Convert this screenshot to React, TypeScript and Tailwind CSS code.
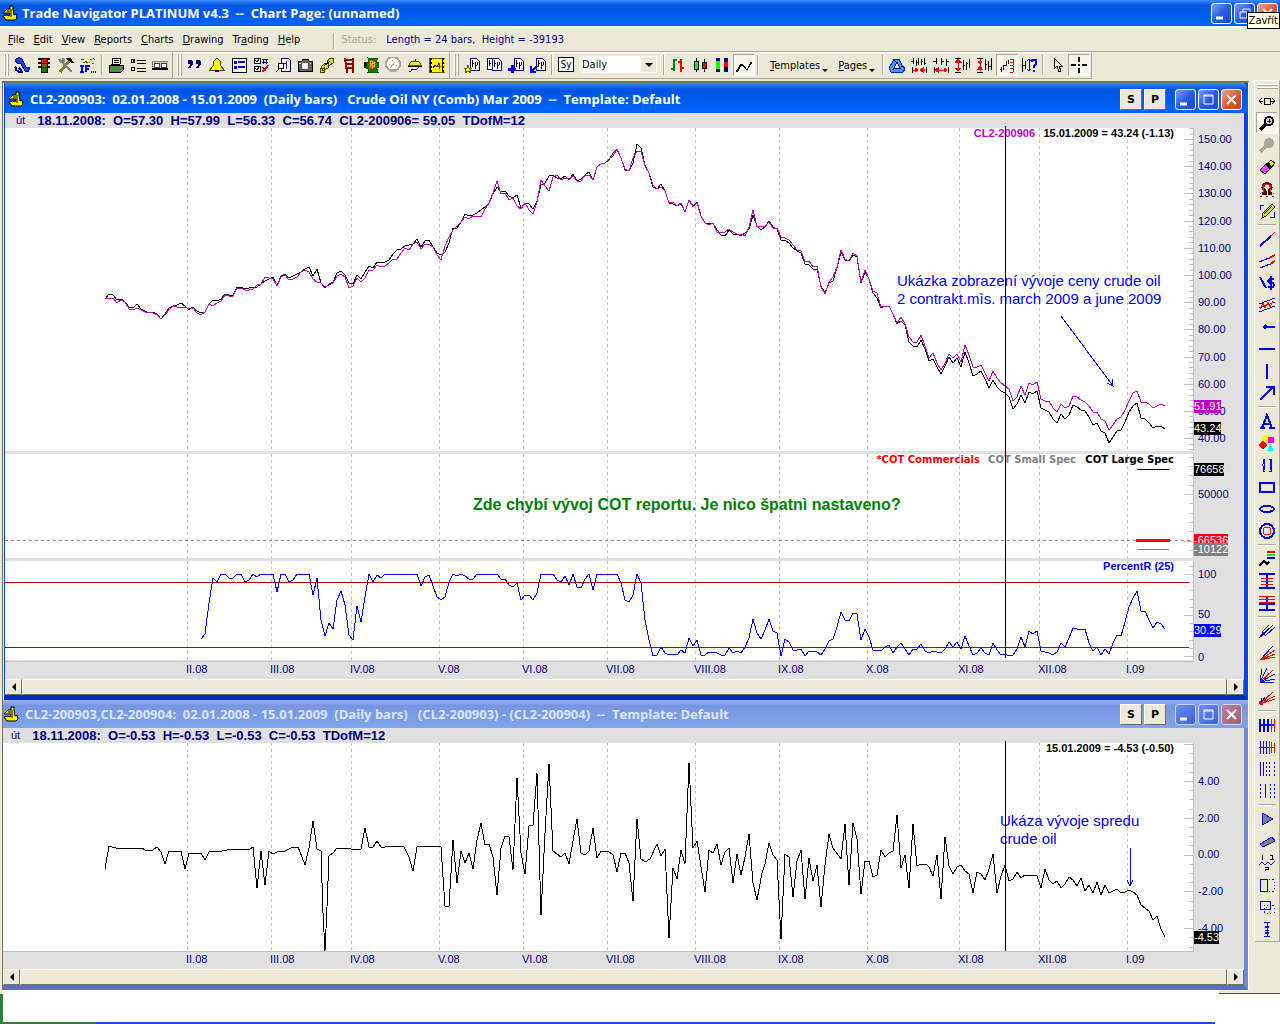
import { Fragment, ReactNode } from 'react';

// one shape of an icon: path, stroke, fill, stroke width
type Shape = [string, string?, string?, number?];

const N = '#000080';
const B = '#0000ff';
const R = '#ff0000';
const K = '#000000';
const Y = '#ffff00';
const G = '#808080';

const PAGE: Shape[] = [
  ['M6 1h6l3 3v9H6z', N, '#ffffff'],
  ['M8 3v7M8 6h2M11 5v7M11 8h2M13 5v3', K],
];

const ICONS: Record<string, Shape[]> = {
  phone: [
    ['M1 3C3 0 8 0 9 4L12 10 16 11 14 15 11 14 7 7 3 6Z', N, '#0050f0'],
    ['M1 10l2 2M1 13l4 1M4 15h5M5 11l3 3', N, 'none', 2],
  ],
  traffic: [
    ['M5 1h6v14H5z', K, '#303030'],
    ['M2 2h3M2 6h3M2 10h3M11 2h3M11 6h3M11 10h3', K, 'none', 2],
    ['M6 2h4v3H6z', R, R],
    ['M6 7h4v2H6z', '#806000', '#806000'],
    ['M6 11h4v3H6z', '#008000', '#008000'],
  ],
  tools: [
    ['M2 15L12 3', '#808000', 'none', 3],
    ['M8 2l4-1 3 4-2 0', K, K],
    ['M3 4l11 11', G, 'none', 2],
    ['M1 2l2 3 3-1-1-3', G, 'none', 2],
  ],
  ifthen: [
    ['M1 2l3 1M5 4l3 2M13 1l2 2', R, 'none', 1],
    ['M12 3L7 7', '#e0c000', 'none', 1],
    ['M3 5h2M10 2h2M12 6h2', '#00a000', 'none', 1],
    ['M0 9h4M2 9v6M0 15h4M6 15V9h4M6 12h3M11 15h1M13 15h1M15 15h1', B, 'none', 2],
  ],
  print: [
    ['M4 7L5 1h8l-1 6z', K, '#ffffff'],
    ['M6 3h5M6 5h5', K],
    ['M1 8h14v5l-2 2H1z', K, '#707070'],
    ['M3 12h8', '#00c000', 'none', 2],
  ],
  options: [
    ['M1 4a2 2 0 1 0 4 0a2 2 0 1 0-4 0M1 12a2 2 0 1 0 4 0a2 2 0 1 0-4 0', K, '#ffffff'],
    ['M3 4h1', K, 'none', 2],
    ['M7 3h9M7 6h9M7 11h9M7 14h9', K],
  ],
  keys: [
    ['M0 4h16v8H0z', G, '#c8c8c8'],
    ['M2 6h5v4H2zM9 6h5v4H9z', '#404040', '#ffffff'],
    ['M0 12h16', K, 'none', 2],
  ],
  quote: [
    ['M1 5a2 2 0 1 1 4 0a2 2 0 1 1-4 0M9 5a2 2 0 1 1 4 0a2 2 0 1 1-4 0', N, N],
    ['M5 4v3L2 11M13 4v3l-3 4', N, 'none', 2],
  ],
  bell: [
    ['M1 13L4 9 5 4 8 1 11 4 12 9 15 13z', '#505000', Y],
    ['M6 14h4', K, 'none', 2],
  ],
  list: [
    ['M1 1h14v14H1z', K, '#ffffff', 1],
    ['M3 5h3M3 10h3', B, 'none', 3],
    ['M7 5h7M7 10h7', B, 'none', 2],
  ],
  checks: [
    ['M1 1h6v5H1zM1 9h6v5H1z', K, '#ffffff'],
    ['M2 3l2 2 3-4M2 11l2 2 3-4', K],
    ['M9 2h6M10 2v5M13 2v5M9 5h6', N],
    ['M9 14l3-1 3-5', R, 'none', 2],
    ['M9 10l3 2', B],
  ],
  findpage: [
    ['M6 1h7l2 2v11H6z', N, '#ffffff'],
    ['M3 9a3 3 0 1 1 6 0a3 3 0 1 1-6 0M4 12L1 15', K, '#ffffff', 1],
    ['M11 4v8M9 6h2', N],
  ],
  camera: [
    ['M1 4h4l1-2h5l1 2h3v10H1z', K, '#606060'],
    ['M5 9a3 3 0 1 1 6 0a3 3 0 1 1-6 0', '#e0e0e0', '#ffffff'],
    ['M2 6h2M13 6h1', '#e0e0e0'],
  ],
  chain: [
    ['M8 5l3-4 4 1-1 4-4 3zM2 10l4-4 4 1-1 4-5 3zM1 12l4-1v4H1z', '#404000', '#e0e000'],
    ['M5 9l6-5', K],
  ],
  ladder: [['M4 1l2 15M12 1v15', '#a00000', 'none', 2], ['M4 3h8M5 7h7M5 11h7', '#a00000', 'none', 2]],
  turtle: [
    ['M1 5h3v5H1zM12 2l3-1M12 13l3 2M6 2L4 0', K, K],
    ['M5 1h10l-2 4h2v5h-2l2 5H5l1-3-3-1V5h3z', '#006000', '#008000'],
    ['M6 4l3-1 3 2v5l-3 2-3-2z', '#a06000', '#ffa040'],
    ['M8 5h1M10 7h1M8 9h1', R, 'none', 1],
  ],
  gauge: [
    ['M1 7a7 7 0 1 1 14 0a7 7 0 1 1-14 0', '#aca899', '#ffffff', 2],
    ['M5 11l5-6M4 7h1M7 3h1M11 8h1M6 12h5', '#aca899', 'none', 1],
  ],
  serve: [
    ['M2 8C3 3 13 3 14 8z', '#505000', '#ffe000'],
    ['M8 2v2M1 9h14', K, 'none', 1],
    ['M4 12h6l3-3M2 15l5-3', K, '#ffffff'],
  ],
  film: [
    ['M0 1h16v14H0z', '#606000', Y],
    ['M2 1v14M14 1v14', K, 'none', 2],
    ['M2 3v2M2 7v2M2 11v2M14 3v2M14 7v2M14 11v2', '#ffffff'],
    ['M4 11l2-3 2 2 2-4', K],
    ['M8 9h4M10 6v6', R],
  ],
  pageNew: [...PAGE, ['M4 8l1 3h3l-2 2 1 3-3-2-3 2 1-3-2-2h3z', '#606000', Y]],
  pages: [
    ['M1 1h6l3 3v8H1z', N, '#ffffff'],
    ['M3 3v6M3 6h2', K],
    ...PAGE,
  ],
  pageAdd: [...PAGE, ['M4 8v8M0 12h8', B, 'none', 3]],
  pageBack: [...PAGE, ['M1 9v6h5M2 14l5-5', B, 'none', 2]],
  bars: [
    ['M4 2v12M1 12h3M4 3h3', '#008000', 'none', 2],
    ['M11 2v13M8 5h3M11 11h3', R, 'none', 2],
  ],
  candles: [
    ['M4 1v14M12 2v13', K],
    ['M2 4h4v8H2z', K, '#00ff00'],
    ['M10 5h4v6h-4z', K, R],
  ],
  hilo: [
    ['M4 1v14', N, 'none', 4],
    ['M4 4v8', '#00ff00', 'none', 4],
    ['M12 1v14', N, 'none', 4],
    ['M12 5v5', R, 'none', 4],
  ],
  line: [['M0 15L5 7l6 6 4-8', K, 'none', 1], ['M1 15L6 7l5 6 5-8', K, 'none', 1]],
  recycle: [
    ['M5 2h5l3 6 3 4-2 3H2L0 11 3 6z', '#0020c0', '#30a0ff'],
    ['M8 5l3 6H5z', N, '#ece9d8'],
    ['M4 2l3 3M12 9l3 0M3 13l3-2', N],
  ],
  squeeze: [
    ['M2 1v6M0 4h2M5 3v6M7 1v7M10 2v6M13 1v7M5 5h2M10 4h2M13 6h2', K],
    ['M1 10v6M15 10v6', K],
    ['M2 13h5M9 13h5', R, 'none', 1],
    ['M4 11l3 2-3 2zM12 11l-3 2 3 2z', R, R],
  ],
  spread: [
    ['M3 1v6M0 4h3M8 1v7M13 2v7M8 4h3M13 4h3M1 10v6M15 10v6', K],
    ['M5 11l-3 2 3 2zM11 11l3 2-3 2z', R, R],
    ['M3 13h10', R],
  ],
  squeezeV: [
    ['M0 1h6M0 15h6M8 3v10M11 5v8M14 2v9M8 8h2M11 6h2', K],
    ['M3 2v12', R],
    ['M0 5h6L3 2zM0 11h6l-3 3z', R, R],
  ],
  spreadV: [
    ['M0 1h6M0 15h6M8 2v11M11 4v10M14 1v12M8 7h2M11 9h4', K],
    ['M3 2v12', R],
    ['M1 4h4L3 7zM1 12h4L3 9z', R, R],
  ],
  scaleR: [
    ['M2 10v5M4 8v5M7 4v5M9 3v4M1 12h2M5 8h3', K],
    ['M14 2v13M11 2h3M11 5h3M11 8h3M11 11h3M11 15h3', R],
  ],
  scaleQ: [
    ['M1 1v14M1 8h3M4 4v8', K],
    ['M8 2v12M6 4l2-2 2 2M6 12l2 2 2-2', B],
    ['M11 5V3h4v4l-2 2v2M13 13v2', B, 'none', 2],
  ],
  pointer: [['M5 1l0 11 3-3 2 6 2-1-2-5h3z', K, '#ffffff']],
  cross: [['M8 0v5M8 7v2M8 11v5M0 8h5M7 8h2M11 8h5', K, 'none', 2]],
  resize: [['M5 5h6v6H5zM0 8h4M12 8h4M3 5L0 8l3 3M13 5l3 3-3 3', K]],
  zoomIn: [
    ['M6 6a4 4 0 1 1 8 0a4 4 0 1 1-8 0', K, '#d0d0d0', 2],
    ['M10 4v4M8 6h4', K],
    ['M7 9L1 15', K, 'none', 3],
  ],
  zoomOff: [
    ['M6 6a4 4 0 1 1 8 0a4 4 0 1 1-8 0', '#aca899', '#aca899', 2],
    ['M7 9L1 15', '#aca899', 'none', 3],
  ],
  eraser: [
    ['M8 5l4-4 4 3-5 6z', K, Y],
    ['M1 11l6-6 4 5-5 5z', K, '#ff40ff'],
    ['M7 5l5 5M9 4l3 4', K, 'none', 2],
  ],
  magnet: [
    ['M3 12h3V10L4 7C3 1 13 1 12 7l-2 3v2h3', '#600000', 'none', 3],
    ['M5 11L4 7C4 2 12 2 12 7l-1 4', '#e02020', 'none', 1],
    ['M1 12l1 1M1 15h2M14 13l1-1M13 15h2M7 15h2', K],
  ],
  pencil: [
    ['M3 15l1-5 9-9 3 3-9 9z', K, '#e0e000', 1],
    ['M5 11l8-8M7 13l8-8', K],
    ['M1 7V2h4M15 9v5h-4', B, 'none', 1],
  ],
  trend: [['M1 15L12 5', B, 'none', 2], ['M12 5l4-4', R]],
  parallel: [
    ['M0 9l10-4M1 15l10-4', B],
    ['M10 5l6-3M11 11l5-3', R, 'none', 2],
  ],
  dollar: [
    ['M1 2l6 11', B, 'none', 2],
    ['M15 4h-4L9 6l2 2h3l1 2-1 2H9M12 1v14', B, 'none', 2],
  ],
  regress: [
    ['M0 7L16 1M0 11L16 5M0 15L16 9', B],
    ['M1 12l3-6 2 5 3-6 2 5 3-6', R],
  ],
  ray: [['M5 8h11M7 6L5 8l2 2', B, 'none', 2]],
  hline: [['M0 8h16', B, 'none', 2]],
  vline: [['M8 1v15', B, 'none', 2]],
  arrow: [['M1 15L14 2M7 2h8v8', B, 'none', 2]],
  text: [['M1 15h5M10 15h6M3 15L8 2l5 13M5 11h6M8 2l-1 0', B, 'none', 2]],
  shapes: [
    ['M3 1h7v6H3z', Y, Y],
    ['M9 5a3 3 0 1 1 6 0a3 3 0 1 1-6 0', '#ff00ff', '#ff00ff'],
    ['M4 6l4 4-4 4-4-4z', R, R],
    ['M11 9l3 6H9z', '#00ffff', '#00ffff'],
  ],
  braces: [['M6 2H4v5L3 8l1 1v5h2M10 2h2v5l1 1-1 1v5h-2', B, 'none', 1], ['M5 3v10M11 3v10', B, 'none', 1]],
  rect: [['M1 4h14v9H1z', B, 'none', 2]],
  ellipse: [['M1 8a7 3 0 1 1 14 0a7 3 0 1 1-14 0', B, 'none', 2]],
  circles: [
    ['M1 8a7 7 0 1 1 14 0a7 7 0 1 1-14 0', B, 'none', 2],
    ['M4 8a4 4 0 1 1 8 0a4 4 0 1 1-8 0', R],
  ],
  zigzag: [
    ['M0 15l5-5 3 3 2-2', K, 'none', 2],
    ['M8 1h8', R, 'none', 2],
    ['M8 4h8', '#00e000', 'none', 2],
    ['M8 7h8', B, 'none', 2],
  ],
  fibIn: [
    ['M0 1h16M0 15h16M8 1v14', B, 'none', 2],
    ['M2 5h12M2 8h12M2 11h12', R],
  ],
  fibOut: [
    ['M0 9h16M0 15h16M8 1v15', B, 'none', 2],
    ['M0 1h16M0 4h16M0 7h16', R],
  ],
  fork: [['M0 15L14 2M3 9L10 2M6 13l10-9M3 9l4 4', B, 'none', 1], ['M1 14l4-4', B, 'none', 2]],
  fanR: [
    ['M1 15L14 1', B],
    ['M1 15L16 5M1 15l15-6M1 15l15-3', R],
  ],
  fanB: [
    ['M1 15L3 2M1 15L8 1M1 15l15-8M1 15l15-3M1 15l14 0', B],
    ['M1 15L14 3', R],
  ],
  fanA: [
    ['M1 15L14 3M1 15l15-8M1 15l15-5', R],
    ['M1 15l2-6M1 15l5-7', B],
    ['M0 13l4 3', R, 'none', 3],
  ],
  cycA: [
    ['M1 2v13M5 2v13M9 2v13M0 8h16', B, 'none', 2],
    ['M12 2v13M15 2v13', R, 'none', 1],
  ],
  cycB: [
    ['M1 2v13M4 2v13M7 2v13M0 8h10', B, 'none', 1],
    ['M10 2v13M12 3v11M15 4v10M10 8h6', R],
  ],
  cycC: [['M1 1v14M4 1v14', B], ['M7 1v2M7 5v2M7 9v2M7 13v2M10 1v2M10 5v2M10 9v2M10 13v2M15 1v2M15 5v2M15 9v2M15 13v2', B]],
  cycD: [['M6 1v14', B], ['M1 1v2M1 5v2M1 9v2M1 13v2M11 1v2M11 5v2M11 9v2M11 13v2M15 1v2M15 5v2M15 9v2M15 13v2', B]],
  tri: [['M3 2l11 6-11 6z', B, G]],
  band: [['M1 11L13 4l3 4-12 6z', B, G]],
  waves: [
    ['M0 10l3-3 3 3 3-3 3 3 4-4', B],
    ['M3 0v5M11 0h3l-1 2 1 2h-3M6 12h3v2H6v2h3', K],
  ],
  boxR: [
    ['M1 2h7v12H1z', B],
    ['M10 2h1M13 2h2M15 5v1M15 8v1M15 11v1M10 14h1M13 14h2', B],
  ],
  boxes: [
    ['M1 2h10v8H1z', B],
    ['M5 6h1M8 6h1M5 9v1M5 12v2M8 14h1M11 14h1M15 14v-1M15 10V9M15 6h-2M7 8v1', B],
  ],
  ruler: [['M8 1v15M5 1h6M5 15h6M6 5l4 2M6 7l4-2M6 9h4M6 11l4 2M6 13l4-2', B]],
};

function Icon({ name }: { name: string }) {
  return (
    <svg viewBox="0 0 16 16" className="size-4" shapeRendering="crispEdges" aria-hidden="true">
      {ICONS[name].map(([d, stroke, fill, width], i) => (
        <path key={i} d={d} stroke={stroke} fill={fill ?? 'none'} strokeWidth={width ?? 1} />
      ))}
    </svg>
  );
}

function AppIcon() {
  return (
    <svg viewBox="0 0 16 16" className="size-4 shrink-0" aria-hidden="true">
      <path d="M8 1h3v3l1 6 2-1 1 4-2 2H4l-3-4 4-1 2 1 1-3H1l4-4h3z" fill="#fff000" stroke="#000" />
      <path d="M9 4v8M5 6h3" stroke="#000" />
    </svg>
  );
}

function ToolButton({ name, pressed = false }: { name: string; pressed?: boolean }) {
  return (
    <button
      type="button"
      aria-label={name}
      className={
        pressed
          ? 'flex size-[22px] shrink-0 items-center justify-center border border-[#aca899] border-r-white border-b-white bg-[#f6f5ee]'
          : 'flex size-[22px] shrink-0 items-center justify-center'
      }
    >
      <Icon name={name} />
    </button>
  );
}

function Sep() {
  return <span className="mx-[2px] h-[20px] w-[2px] shrink-0 border-l border-[#aca899] bg-white" />;
}

function Grip() {
  return (
    <span className="mr-[2px] ml-1 flex h-[22px] shrink-0 gap-px">
      <span className="w-[2px] border-r border-[#aca899] bg-white" />
      <span className="w-[2px] border-r border-[#aca899] bg-white" />
    </span>
  );
}

function ToolGroup({ children }: { children: ReactNode }) {
  return (
    <div className="flex h-[27px] items-center border-t border-r border-b border-t-white border-r-[#aca899] border-b-[#aca899] pr-px pb-[2px]">
      <Grip />
      {children}
    </div>
  );
}

type Caption = 'min' | 'max' | 'restore' | 'close';

const CAPTION_PATHS: Record<Caption, string> = {
  min: 'M4 14h7',
  max: 'M5 5h9v9H5zM5 6h9',
  restore: 'M8 8V5h7v6h-3M5 8h7v6H5z',
  close: 'M5 5l9 9M14 5l-9 9',
};

function CaptionButton({ kind, dim = false }: { kind: Caption; dim?: boolean }) {
  let bg = 'bg-linear-to-br from-[#7a9cf4] via-[#2a5be4] to-[#1548d4]';
  if (dim) bg = 'bg-linear-to-br from-[#6d8cec] to-[#3a62dc]';
  if (kind === 'close') bg = 'bg-linear-to-br from-[#f0a088] via-[#e25a38] to-[#c83c18]';
  if (kind === 'close' && dim) bg = 'bg-linear-to-br from-[#b87c98] to-[#a86070]';
  return (
    <button
      type="button"
      aria-label={kind}
      className={`flex size-[21px] items-center justify-center rounded-[3px] border ${dim ? 'border-[#c8d4f8]' : 'border-white'} ${bg}`}
    >
      <svg viewBox="0 0 19 19" className="size-[19px]" aria-hidden="true">
        <path
          d={CAPTION_PATHS[kind]}
          fill="none"
          stroke="#fff"
          strokeWidth={kind === 'min' ? 3 : kind === 'close' ? 2 : 1}
        />
      </svg>
    </button>
  );
}

function SquareButton({ children }: { children: ReactNode }) {
  return (
    <button
      type="button"
      className="h-[21px] w-[22px] border border-white border-r-[#716f64] border-b-[#716f64] bg-[#ece9d8] font-['DejaVu_Sans',sans-serif] text-[11px] leading-none font-bold text-black"
    >
      {children}
    </button>
  );
}

function ScrollBar() {
  const arrow =
    'flex h-4 w-[17px] shrink-0 items-center justify-center border border-white border-r-[#716f64] border-b-[#716f64] bg-[#ece9d8]';
  return (
    <div className="flex h-4 bg-[#f6f5ee]">
      <button type="button" aria-label="Scroll left" className={arrow}>
        <svg viewBox="0 0 8 8" className="size-2"><path d="M6 0v8L2 4z" /></svg>
      </button>
      <div className="flex-1 border border-white border-r-[#716f64] border-b-[#716f64] bg-[#ece9d8]" />
      <button type="button" aria-label="Scroll right" className={arrow}>
        <svg viewBox="0 0 8 8" className="size-2"><path d="M2 0v8l4-4z" /></svg>
      </button>
    </div>
  );
}

interface ChartWindowProps {
  title: string;
  day: string;
  info: string;
  active?: boolean;
  children: ReactNode;
}

function ChartWindow({ title, day, info, active = false, children }: ChartWindowProps) {
  return (
    <section
      className={
        active
          ? 'ml-px border-r-4 border-b-[5px] border-l border-[#0046e0] border-b-[#0030b8]'
          : 'border-r-4 border-b-[5px] border-[#7088dc] border-b-[#5c6cc8]'
      }
    >
      <header
        className={
          active
            ? '-mr-1 flex h-[30px] items-center rounded-tr-md bg-linear-to-b from-[#3c8cff] via-[#0054e0] via-20% to-[#0064ff] pt-[2px] pr-[6px] pl-[3px]'
            : '-mr-1 flex h-[28px] items-center bg-linear-to-b from-[#a0b4ec] via-[#7896e0] via-20% to-[#80a4ea] pr-[6px]'
        }
      >
        <AppIcon />
        <h2
          className={`ml-[6px] flex-1 overflow-hidden font-['Open_Sans',sans-serif] text-[13px] leading-4 font-bold whitespace-pre ${active ? 'text-white' : 'text-[#dbe5fb]'}`}
        >
          {title}
        </h2>
        <div className="flex gap-[2px]">
          <SquareButton>S</SquareButton>
          <SquareButton>P</SquareButton>
          <span className="w-[5px]" />
          <CaptionButton kind="min" dim={!active} />
          <CaptionButton kind="max" dim={!active} />
          <CaptionButton kind="close" dim={!active} />
        </div>
      </header>
      <div className={`flex h-[15px] items-center gap-3 bg-[#e0e0e0] font-['Liberation_Sans',sans-serif] text-[11px] leading-none whitespace-pre text-[#000080] ${active ? 'pl-[11px]' : 'pl-2'}`}>
        <span>{day}</span>
        <span className="text-[13px] font-bold">{info}</span>
      </div>
      {children}
      <ScrollBar />
    </section>
  );
}

const MONTHS: [number, string][] = [
  [187, 'II.08'], [271, 'III.08'], [351, 'IV.08'], [439, 'V.08'], [523, 'VI.08'], [607, 'VII.08'],
  [695, 'VIII.08'], [779, 'IX.08'], [867, 'X.08'], [959, 'XI.08'], [1039, 'XII.08'], [1127, 'I.09'],
];

// closing prices, one per bar, as chart rows
const MARCH = [
  299, 294, 295, 300, 299, 302, 307, 308, 304, 309, 311, 313, 312, 314, 319, 314, 308, 306, 305, 303,
  306, 310, 307, 311, 313, 312, 304, 300, 301, 299, 294, 295, 295, 287, 287, 289, 288, 287, 287, 284,
  281, 279, 277, 286, 276, 274, 278, 276, 274, 272, 269, 267, 276, 269, 283, 288, 284, 282, 273, 271,
  275, 283, 284, 275, 279, 272, 266, 268, 262, 263, 262, 260, 254, 250, 249, 246, 245, 244, 239, 247,
  241, 240, 247, 253, 255, 252, 243, 228, 228, 222, 214, 216, 215, 213, 210, 207, 203, 194, 187, 192,
  191, 196, 198, 195, 208, 203, 204, 209, 201, 185, 183, 176, 175, 178, 179, 176, 180, 174, 181, 179,
  175, 172, 180, 167, 164, 163, 160, 153, 150, 158, 170, 171, 163, 144, 148, 165, 173, 187, 189, 184,
  191, 203, 204, 206, 204, 212, 200, 206, 202, 216, 223, 223, 223, 230, 235, 236, 230, 234, 234, 236,
  233, 229, 215, 226, 230, 227, 221, 227, 229, 240, 240, 243, 248, 251, 253, 264, 265, 269, 269, 286,
  293, 283, 281, 268, 252, 260, 261, 255, 257, 283, 272, 279, 293, 298, 308, 306, 306, 314, 324, 321,
  325, 342, 346, 347, 340, 349, 361, 359, 367, 374, 366, 357, 363, 358, 367, 352, 363, 376, 374, 371,
  379, 388, 380, 387, 391, 393, 397, 409, 404, 395, 403, 392, 394, 391, 408, 410, 412, 419, 423, 414,
  419, 415, 405, 407, 410, 411, 417, 425, 423, 431, 433, 443, 437, 431, 430, 422, 412, 406, 403, 418,
  419, 423, 428, 426, 426, 429,
];

const JUNE = [
  299, 298, 298, 303, 300, 302, 309, 310, 308, 310, 312, 312, 313, 315, 319, 315, 310, 306, 307, 307,
  307, 309, 308, 313, 315, 312, 304, 306, 303, 301, 295, 296, 296, 288, 288, 290, 290, 289, 285, 284,
  277, 278, 279, 286, 277, 275, 280, 279, 277, 272, 270, 272, 279, 282, 283, 287, 285, 283, 276, 274,
  277, 288, 286, 278, 282, 278, 270, 270, 265, 267, 266, 263, 259, 259, 253, 248, 250, 244, 242, 249,
  244, 244, 247, 255, 260, 246, 237, 230, 226, 222, 217, 219, 216, 216, 217, 209, 203, 193, 181, 194,
  193, 200, 198, 206, 209, 203, 210, 214, 202, 180, 186, 191, 177, 175, 180, 178, 179, 176, 181, 181,
  175, 175, 180, 167, 164, 163, 159, 156, 149, 158, 169, 171, 158, 151, 151, 166, 173, 185, 189, 187,
  191, 203, 202, 206, 203, 212, 200, 207, 203, 216, 223, 225, 223, 232, 232, 232, 229, 232, 234, 234,
  236, 227, 210, 227, 226, 226, 222, 228, 228, 237, 238, 240, 245, 250, 251, 262, 261, 267, 266, 287,
  294, 282, 277, 267, 250, 259, 261, 253, 256, 282, 270, 279, 291, 293, 307, 306, 306, 314, 323, 317,
  324, 337, 342, 342, 335, 346, 358, 353, 363, 370, 363, 354, 358, 354, 362, 345, 355, 367, 367, 365,
  373, 381, 371, 378, 383, 386, 389, 401, 397, 386, 395, 383, 385, 382, 399, 401, 401, 408, 412, 404,
  408, 406, 396, 397, 400, 402, 406, 412, 412, 419, 421, 430, 425, 419, 417, 410, 401, 393, 391, 402,
  402, 404, 408, 406, 404, 406,
];

const PERCENT_R =
  '201,639 205,634 209,603 213,578 217,582 221,574 225,574 229,578 233,578 237,574 241,574 245,582 249,580 253,574 257,577 261,574 273,574 277,592 281,574 285,574 289,582 293,580 297,574 309,574 313,595 317,578 321,620 325,636 329,623 333,629 337,600 341,591 345,605 349,635 353,640 357,606 361,622 365,597 369,574 373,582 377,575 381,578 385,574 417,574 421,586 425,577 429,575 433,586 437,597 441,600 445,597 449,582 453,574 457,576 461,574 465,576 469,579 473,579 477,574 497,574 501,579 505,579 509,585 513,587 517,583 521,600 525,595 529,595 533,600 537,593 541,574 553,574 557,580 561,582 565,576 569,585 573,574 577,587 581,588 585,579 589,574 593,590 597,574 617,574 621,583 625,600 629,602 633,595 637,574 641,583 645,620 649,640 653,656 657,655 661,647 665,653 669,655 673,654 677,655 681,650 685,653 689,638 693,646 697,640 701,655 705,655 709,652 717,653 721,655 725,655 729,648 733,653 737,651 741,653 745,647 749,638 753,619 757,633 761,639 765,630 769,619 773,631 777,633 781,656 785,639 789,642 793,650 797,650 801,649 805,656 809,651 817,652 821,655 825,649 829,641 833,639 837,627 841,612 845,620 849,621 853,613 857,614 861,640 865,629 869,637 873,650 881,651 885,647 889,645 893,653 897,647 901,643 905,649 909,655 913,649 917,649 921,644 925,651 929,653 933,651 937,652 941,653 945,649 949,642 953,647 957,642 961,649 965,636 969,646 973,655 977,653 981,648 985,653 989,655 993,643 997,650 1001,655 1005,654 1009,656 1013,655 1017,649 1021,637 1025,647 1029,631 1033,634 1037,631 1041,651 1045,652 1049,653 1053,655 1057,652 1061,643 1065,647 1069,638 1073,628 1077,629 1085,629 1089,643 1093,651 1097,647 1101,655 1105,649 1109,654 1113,643 1117,635 1121,636 1125,622 1129,607 1133,598 1137,591 1141,611 1145,611 1149,620 1153,628 1157,622 1161,624 1165,629';

const SPREAD =
  '105,869 109,846 112,847 116,848 131,848 133,849 136,848 142,848 145,850 153,850 157,847 161,852 165,864 169,851 181,851 185,869 189,853 201,853 205,860 209,852 222,851 227,850 237,849 249,850 253,847 257,888 261,851 265,885 269,851 273,854 277,852 285,851 293,847 298,847 302,857 305,865 309,848 313,821 317,849 321,851 323,913 325,951 327,907 329,856 333,853 337,848 348,848 351,849 361,849 365,828 369,847 373,847 377,841 381,847 385,847 394,846 404,847 409,857 413,871 417,847 433,846 437,846 441,847 445,906 449,906 453,840 457,883 461,851 465,863 469,853 473,869 477,840 481,823 485,845 489,844 493,857 497,895 501,848 505,836 509,837 513,870 517,778 521,853 525,874 529,826 533,825 537,773 541,915 545,833 549,764 553,851 557,854 561,857 565,853 569,864 573,841 577,819 581,853 585,855 589,851 593,828 597,858 601,851 608,851 613,855 617,872 621,853 625,853 629,863 633,901 637,819 641,859 645,862 650,859 657,844 661,856 665,849 669,938 673,868 677,879 681,850 685,864 689,763 693,848 697,841 705,892 709,850 713,853 717,844 721,865 725,852 729,848 733,883 737,854 741,875 745,857 749,834 753,883 757,900 762,873 765,864 769,843 773,855 777,860 781,939 785,854 789,857 793,897 797,861 801,850 805,899 809,858 813,881 817,865 821,907 825,865 829,834 833,848 841,859 845,824 849,885 853,823 857,839 861,894 865,861 869,861 873,877 877,875 881,850 885,857 889,853 893,851 897,815 901,868 905,855 909,888 913,824 917,866 921,864 926,864 929,867 933,876 937,855 941,899 945,837 949,866 953,874 957,867 961,865 965,871 969,874 973,893 977,872 981,874 985,880 989,869 993,854 997,893 1001,876 1005,865 1009,881 1013,879 1017,872 1021,878 1025,875 1033,875 1037,876 1041,888 1045,869 1049,880 1053,884 1057,881 1061,888 1065,884 1069,877 1073,880 1077,886 1081,878 1085,891 1089,885 1093,893 1097,882 1101,895 1105,885 1109,893 1117,889 1121,893 1125,892 1129,890 1133,892 1137,895 1141,905 1149,911 1153,920 1157,916 1161,929 1165,937';

function toPoints(rows: number[]) {
  return rows.map((y, i) => `${105 + i * 4},${y}`).join(' ');
}

// ruler ticks on the right edge, every nth one is long
function Ticks({ from, top, bottom, step, major }: { from: number; top: number; bottom: number; step: number; major: number }) {
  let d = '';
  for (let i = -20; i < 80; i++) {
    const y = Math.round(from + i * step);
    if (y < top || y > bottom) continue;
    d += i % major === 0 ? `M1184 ${y}h9` : `M1189 ${y}h4`;
  }
  return <path d={d} stroke="#c0c0c0" />;
}

function Grid({ bands }: { bands: [number, number][] }) {
  return (
    <g stroke="#c0c0c0" strokeDasharray="3 3">
      {MONTHS.map(([x]) => (
        <Fragment key={x}>
          {bands.map(([top, bottom]) => (
            <line key={top} x1={x} x2={x} y1={top} y2={bottom} />
          ))}
        </Fragment>
      ))}
    </g>
  );
}

function MonthLabels({ y }: { y: number }) {
  return (
    <g fill={N}>
      {MONTHS.map(([x, label]) => (
        <text key={x} x={x - 1} y={y}>{label}</text>
      ))}
    </g>
  );
}

function Tag({ y, width, color, children }: { y: number; width: number; color: string; children: string }) {
  return (
    <g>
      <rect x="1194" y={y} width={width} height="13" fill={color} />
      <text x="1194" y={y + 10} fill="#fff">{children}</text>
    </g>
  );
}

const PRICES = [150, 140, 130, 120, 110, 100, 90, 80, 70, 60, 50, 40];

function PriceChart() {
  return (
    <svg
      viewBox="5 128 1239 551"
      className="block h-auto w-full overflow-visible bg-[#e0e0e0] font-['Liberation_Sans',sans-serif] text-[11px]"
      fill="none"
      shapeRendering="crispEdges"
      role="img"
      aria-label="Crude oil price, COT and PercentR"
    >
      <path d="M5 128h1188v323H5zM5 454h1188v104H5zM5 561h1188v99H5z" fill="#fff" />
      <Grid bands={[[128, 451], [454, 558], [561, 660]]} />
      <path d="M1193 128v323M1193 454v104M1193 561v99M5 661h1189" stroke="#c0c0c0" />
      <Ticks from={139} top={128} bottom={450} step={5.44} major={5} />
      <Ticks from={494} top={456} bottom={557} step={9.3} major={5} />
      <Ticks from={574} top={562} bottom={658} step={8.2} major={5} />

      <polyline points={toPoints(MARCH)} stroke="#000" />
      <polyline points={toPoints(JUNE)} stroke="#c000c0" />

      <line x1="5" x2="1193" y1="540" y2="540" stroke="#808080" strokeDasharray="3 3" />
      <path d="M1137 469h32" stroke="#000" />
      <path d="M1136 540h34" stroke={R} strokeWidth="3" />
      <path d="M1137 549h32" stroke={G} />

      <path d="M5 582h1184M5 647h1184" stroke="#b00000" />
      <polyline points={PERCENT_R} stroke={B} />

      <g fill={N}>
        {PRICES.map((p, i) => (
          <text key={p} x="1198" y={143 + Math.round(i * 27.2)}>{p}.00</text>
        ))}
        <text x="1198" y="498">50000</text>
        <text x="1198" y="578">100</text>
        <text x="1198" y="618">50</text>
        <text x="1198" y="661">0</text>
      </g>
      <Tag y={400} width={27} color="#c000c0">51.91</Tag>
      <Tag y={422} width={27} color="#000">43.24</Tag>
      <Tag y={463} width={30} color="#000">76658</Tag>
      <Tag y={534} width={34} color={R}>-66536</Tag>
      <Tag y={543} width={34} color={G}>-10122</Tag>
      <Tag y={624} width={27} color={B}>30.29</Tag>
      <MonthLabels y={673} />

      <g className="text-[11px] font-bold" textAnchor="end">
        <text x="1035" y="137" fill="#c000c0">CL2-200906</text>
        <text x="1174" y="137" fill="#000">15.01.2009 = 43.24 (-1.13)</text>
        <text x="1174" y="570" fill={B}>PercentR (25)</text>
      </g>
      <g className="font-['DejaVu_Sans',sans-serif] text-[10px] font-bold" textAnchor="end">
        <text x="980" y="463" fill={R}>*COT Commercials</text>
        <text x="1076" y="463" fill={G}>COT Small Spec</text>
        <text x="1174" y="463" fill="#000">COT Large Spec</text>
      </g>

      <text x="473" y="510" fill="#008000" className="text-[16px] font-bold">
        Zde chybí vývoj COT reportu. Je nìco špatnì nastaveno?
      </text>
      <g fill={B} className="text-[15px]">
        <text x="897" y="286">Ukázka zobrazení vývoje ceny crude oil</text>
        <text x="897" y="304">2 contrakt.mìs. march 2009 a june 2009</text>
      </g>
      <path d="M1061 316L1113 386M1107 383l6 3-1-7" stroke={B} />
      <path d="M1005 126v532" stroke="#000" />
    </svg>
  );
}

function SpreadChart() {
  return (
    <svg
      viewBox="3 743 1241 226"
      className="block h-auto w-full overflow-visible bg-[#e0e0e0] font-['Liberation_Sans',sans-serif] text-[11px]"
      fill="none"
      shapeRendering="crispEdges"
      role="img"
      aria-label="Crude oil spread"
    >
      <path d="M3 743h1190v208H3z" fill="#fff" />
      <Grid bands={[[743, 951]]} />
      <path d="M1193 743v208M3 951h1191" stroke="#c0c0c0" />
      <Ticks from={781} top={744} bottom={950} step={9.2} major={4} />
      <polyline points={SPREAD} stroke="#000" />
      <g fill={N}>
        <text x="1198" y="785">4.00</text>
        <text x="1198" y="822">2.00</text>
        <text x="1198" y="858">0.00</text>
        <text x="1198" y="895">-2.00</text>
        <text x="1198" y="932">-4.00</text>
      </g>
      <Tag y={931} width={25} color="#000">-4.53</Tag>
      <MonthLabels y={963} />
      <text x="1174" y="752" fill="#000" textAnchor="end" className="text-[11px] font-bold">
        15.01.2009 = -4.53 (-0.50)
      </text>
      <g fill={B} className="text-[15px]">
        <text x="1000" y="826">Ukáza vývoje spredu</text>
        <text x="1000" y="844">crude oil</text>
      </g>
      <path d="M1130 848v38M1127 880l3 6 3-6" stroke={B} />
      <path d="M1005 741v210" stroke="#000" />
    </svg>
  );
}

const MENU: [string, string, string][] = [
  ['', 'F', 'ile'], ['', 'E', 'dit'], ['', 'V', 'iew'], ['', 'R', 'eports'],
  ['', 'C', 'harts'], ['', 'D', 'rawing'], ['Tr', 'a', 'ding'], ['', 'H', 'elp'],
];

const SIDE_TOOLS = [
  ['resize', 'zoomIn', 'zoomOff', 'eraser', 'magnet', 'pencil'],
  ['trend', 'parallel', 'dollar', 'regress', 'ray', 'hline', 'vline', 'arrow'],
  ['text', 'shapes', 'braces', 'rect', 'ellipse', 'circles'],
  ['zigzag', 'fibIn', 'fibOut'],
  ['fork', 'fanR', 'fanB', 'fanA'],
  ['cycA', 'cycB', 'cycC', 'cycD'],
  ['tri', 'band', 'waves', 'boxR', 'boxes', 'ruler'],
];

function TitleBar() {
  return (
    <header className="relative flex h-[26px] items-center bg-linear-to-b from-[#3c8cff] via-[#0054e0] via-20% to-[#0064ff] pr-[2px] pl-[2px]">
      <AppIcon />
      <h1 className="ml-1 flex-1 font-['Open_Sans',sans-serif] text-[13px] leading-4 font-bold whitespace-pre text-white">
        {'Trade Navigator PLATINUM v4.3  --  Chart Page: (unnamed)'}
      </h1>
      <div className="flex gap-[2px]">
        <CaptionButton kind="min" />
        <CaptionButton kind="restore" />
        <CaptionButton kind="close" />
      </div>
      <div
        role="tooltip"
        className="absolute top-3 right-0 z-10 border border-black bg-[#ffffe1] px-px text-[11px] leading-[15px] text-black"
      >
        Zavřít
      </div>
    </header>
  );
}

function MenuBar() {
  return (
    <div className="flex h-[26px] items-center border-t-2 border-b border-t-white border-b-[#aca899] pt-[2px] pl-2 text-[11px]">
      <nav className="flex gap-[9px]">
        {MENU.map(([pre, key, rest]) => (
          <a key={key + rest} href="#" className="text-black">
            {pre}
            <span className="underline">{key}</span>
            {rest}
          </a>
        ))}
      </nav>
      <span className="ml-[33px] h-[16px] w-[2px] border-l border-[#aca899] bg-white" />
      <span className="ml-[6px] text-[#aca899]">Status:</span>
      <span className="ml-[10px] whitespace-pre text-[#000080]">{'Length = 24 bars,  Height = -39193'}</span>
    </div>
  );
}

function MenuButton({ first, rest }: { first: string; rest: string }) {
  return (
    <button type="button" className="flex items-end gap-[2px] px-[5px] pt-[3px] text-[11px] text-black">
      <span>
        <span className="underline">{first}</span>
        {rest}
      </span>
      <svg viewBox="0 0 6 4" className="mb-px h-1 w-[6px]"><path d="M0 0h6L3 3z" /></svg>
    </button>
  );
}

function ToolBar() {
  return (
    <div className="flex h-[27px]">
      <ToolGroup>
        {['phone', 'traffic', 'tools', 'ifthen'].map((n) => <ToolButton key={n} name={n} />)}
        <Sep />
        {['print', 'options', 'keys'].map((n) => <ToolButton key={n} name={n} />)}
      </ToolGroup>
      <ToolGroup>
        {['quote', 'bell', 'list', 'checks', 'findpage', 'camera', 'chain', 'ladder', 'turtle', 'gauge', 'serve', 'film'].map(
          (n) => <ToolButton key={n} name={n} />,
        )}
      </ToolGroup>
      <ToolGroup>
        {['pageNew', 'pages', 'pageAdd', 'pageBack'].map((n) => <ToolButton key={n} name={n} />)}
        <Sep />
        <button type="button" className="mx-[3px] h-[15px] w-[16px] border border-black bg-white text-[10px] leading-none text-black">
          Sy
        </button>
        <div className="relative mr-[4px] ml-[4px]">
          <select
            aria-label="Bar period"
            defaultValue="Daily"
            className="block h-[17px] w-[76px] appearance-none bg-white pl-px text-[11px] leading-[17px] text-black"
          >
            <option>Daily</option>
            <option>Weekly</option>
            <option>Monthly</option>
          </select>
          <span className="pointer-events-none absolute top-px right-px flex h-[15px] w-[15px] items-center justify-center bg-[#ece9d8]">
            <svg viewBox="0 0 8 4" className="h-1 w-2"><path d="M0 0h8L4 4z" /></svg>
          </span>
        </div>
        <Sep />
        {['bars', 'candles', 'hilo'].map((n) => <ToolButton key={n} name={n} />)}
        <ToolButton name="line" pressed />
        <Sep />
        <span className="w-1" />
        <MenuButton first="T" rest="emplates" />
        <MenuButton first="P" rest="ages" />
        <Sep />
        {['recycle', 'squeeze', 'spread', 'squeezeV', 'spreadV'].map((n) => <ToolButton key={n} name={n} />)}
        <ToolButton name="scaleR" pressed />
        <ToolButton name="scaleQ" />
        <Sep />
        <ToolButton name="pointer" />
        <ToolButton name="cross" pressed />
      </ToolGroup>
    </div>
  );
}

function SideBar() {
  return (
    <aside className="mt-px flex w-[26px] shrink-0 flex-col items-center self-start border-t border-r border-b border-l border-[#aca899] border-t-white border-l-white pb-px">
      <span className="mt-[3px] h-[2px] w-[21px] border-b border-[#aca899] bg-white" />
      <span className="my-px h-[2px] w-[21px] border-b border-[#aca899] bg-white" />
      {SIDE_TOOLS.map((group, i) => (
        <Fragment key={i}>
          {i > 0 && <span className="my-[2px] h-[2px] w-[18px] border-t border-[#aca899] bg-white" />}
          {group.map((n) => (
            <ToolButton key={n} name={n} pressed={n === 'zoomIn'} />
          ))}
        </Fragment>
      ))}
    </aside>
  );
}

export default function App() {
  return (
    <div className="bg-[#ece9d8] font-['DejaVu_Sans_Condensed','Liberation_Sans',sans-serif]">
      <TitleBar />
      <MenuBar />
      <ToolBar />
      <main className="flex">
        <div className="mt-[2px] mr-[5px] ml-[2px] min-w-0 flex-1 border-t-2 border-r border-l border-[#716f64] border-r-white">
          <ChartWindow
            active
            title="CL2-200903:  02.01.2008 - 15.01.2009  (Daily bars)   Crude Oil NY (Comb) Mar 2009  --  Template: Default"
            day="út"
            info="18.11.2008:  O=57.30  H=57.99  L=56.33  C=56.74  CL2-200906= 59.05  TDofM=12"
          >
            <PriceChart />
          </ChartWindow>
          <ChartWindow
            title="CL2-200903,CL2-200904:  02.01.2008 - 15.01.2009  (Daily bars)   (CL2-200903) - (CL2-200904)  --  Template: Default"
            day="út"
            info="18.11.2008:  O=-0.53  H=-0.53  L=-0.53  C=-0.53  TDofM=12"
          >
            <SpreadChart />
          </ChartWindow>
        </div>
        <SideBar />
      </main>
      <footer>
        <div className="flex h-1">
          <div className="ml-[3px] flex-1 bg-white" />
          <div className="w-[61px] border-b border-[#0054d0]" />
        </div>
        <div className="h-7 border-l-[3px] border-[#2f8038] bg-white" />
        <div className="flex h-[2px] bg-white">
          <div className="w-24 bg-[#2f8038]" />
          <div className="mr-[65px] flex-1 bg-[#1c50c8]" />
        </div>
      </footer>
    </div>
  );
}
